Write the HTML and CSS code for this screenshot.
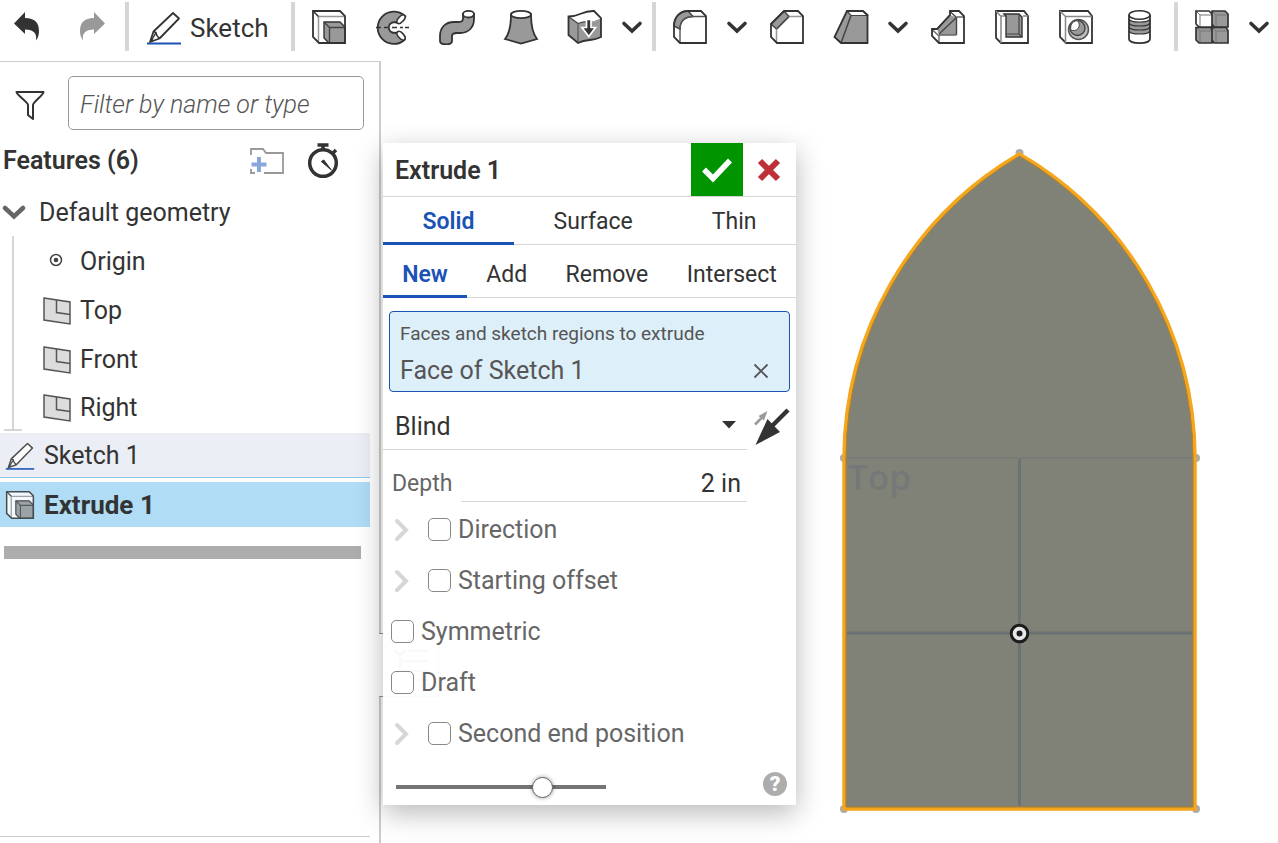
FILE: index.html
```html
<!DOCTYPE html>
<html lang="en">
<head>
<meta charset="utf-8">
<title>Part Studio</title>
<link rel="stylesheet" href="styles.css">
</head>
<body>
<svg class="defs" width="0" height="0" aria-hidden="true">
  <symbol id="i-caret" viewBox="0 0 22 36"><path d="M3 14.500l8 7.500 8-7.500" fill="none" stroke="#333" stroke-width="3.600" stroke-linecap="round"/></symbol>
  <symbol id="i-pencil" viewBox="0 0 36 36">
    <path d="M1 33.500H35" stroke="#1b52b5" stroke-width="2.200"/>
    <path d="M4 32l3.500-10.500L27 3l6 5.500L13.500 28.500z" fill="#fff" stroke="#333" stroke-width="1.800" stroke-linejoin="round"/>
    <path d="M7.500 21.500l2.500 1 .8 3 2.700 3M10 22.500l-4 7" fill="none" stroke="#333" stroke-width="1.500"/>
    <path d="M4 32l1.200-4 2.600 2.200z" fill="#333"/>
  </symbol>
  <symbol id="i-extrude" viewBox="0 0 36 36">
    <path d="M2 2H29L34 7V34H8L2 28z" fill="#fff"/>
    <path d="M7.500 34V7.500H34" fill="none" stroke="#999" stroke-width="1.500"/><path d="M2 2l5.500 5.500" stroke="#333" stroke-width="1.500"/>
    <path d="M13 13H29L34 18V34H18L13 29z" fill="#999" stroke="#333" stroke-width="1.400"/>
    <path d="M13 13l5.500 5.500H34M18.500 18.500V34" fill="none" stroke="#444" stroke-width="1.400"/>
    <path d="M2 2H29L34 7V34H8L2 28z" fill="none" stroke="#333" stroke-width="1.800"/>
  </symbol>
  <symbol id="i-plane" viewBox="0 0 28 28"><path d="M1 1l26 4v22L1 23z" fill="#dcdcdc" stroke="#555" stroke-width="1.500"/><path d="M13.500 3v12.500L27 17.500" fill="none" stroke="#555" stroke-width="1.500"/></symbol>
  <symbol id="i-arrow" viewBox="0 0 14 24"><path d="M2 3l9 9-9 9" fill="none" stroke="#d6d6d6" stroke-width="4" stroke-linecap="round"/></symbol>
</svg>

<header class="toolbar">
  <div class="group history">
    <button aria-label="Undo"><svg class="icon" viewBox="0 0 36 36"><path d="M5 14.500L16 3v6c10 0 14 5 14 13 0 4-1 7-3 9.500 1-7-2-11-11-11V25z" fill="#333"/></svg></button>
    <button aria-label="Redo"><svg class="icon" viewBox="0 0 36 36"><path d="M32 14.500L21 3v6C11 9 7 14 7 22c0 4 1 7 3 9.500-1-7 2-11 11-11V25z" fill="#999"/></svg></button>
  </div>
  <span class="sep"></span>
  <button class="sketch"><svg class="icon"><use href="#i-pencil"/></svg>Sketch</button>
  <span class="sep"></span>
  <div class="group">
    <button aria-label="Extrude"><svg class="icon"><use href="#i-extrude"/></svg></button>
    <button aria-label="Revolve"><svg class="icon" viewBox="0 0 36 36">
      <path d="M29.500 6.500A16.200 16.200 0 1 0 29.500 31c2-2.500-2-8-6-8-3 2-7 0-7.500-4.500 0-4 4-6 7-4.500 4 0 8-5 6-7.500z" fill="#999" stroke="#333" stroke-width="1.800"/>
      <ellipse cx="26" cy="10.300" rx="2.700" ry="5.200" transform="rotate(42 26 10.300)" fill="#fff" stroke="#333" stroke-width="1.500"/>
      <ellipse cx="26" cy="26.700" rx="2.700" ry="5.200" transform="rotate(-42 26 26.700)" fill="#fff" stroke="#333" stroke-width="1.500"/>
      <circle cx="18.500" cy="18.500" r="4.200" fill="#fff"/>
      <path d="M22 13.700a5.500 5.500 0 1 0 0 9.600" fill="none" stroke="#333" stroke-width="1.600"/>
      <path d="M1 18.500h5m3 0h4m4 0h5m3 0h3m2 0h4" stroke="#333" stroke-width="1.600"/></svg></button>
    <button aria-label="Sweep"><svg class="icon" viewBox="0 0 36 36">
      <path d="M24 5v4c0 4-2 4-6 4h-3C6 13 1 19 1 27v5c0 4.500 12 4.500 12 0v-5c0-2 2-3 5-3h3c9 0 14-6 14-14V5z" fill="#999" stroke="#333" stroke-width="1.800"/>
      <ellipse cx="29.500" cy="5.200" rx="5.500" ry="3.300" fill="#fff" stroke="#333" stroke-width="1.800"/></svg></button>
    <button aria-label="Loft"><svg class="icon" viewBox="0 0 36 36">
      <path d="M8 5.500C8 15 6 25 2 30l16 4.500L34 30C30 25 28 15 28 5.500z" fill="#999" stroke="#333" stroke-width="1.800"/>
      <ellipse cx="18" cy="5.500" rx="10" ry="3.700" fill="#fff" stroke="#333" stroke-width="1.800"/></svg></button>
    <button aria-label="Thicken"><svg class="icon" viewBox="0 0 36 36">
      <path d="M1.500 7.500L11 15c8-4 13 0 23-6v19c-10 6-12 1-22 6l-10.500-8z" fill="#999"/>
      <path d="M1.500 7.500c12 0 13-6 25.500-5.500l7 7c-10 4-13 1-23 5z" fill="#fff"/>
      <path d="M11 14v19.500" stroke="#666" stroke-width="1.500"/><path d="M1.500 7.500l9.500 7M11 14.500c6-2.500 9-1.500 13-2" fill="none" stroke="#444" stroke-width="1.300"/>
      <path d="M1.500 7.500c12 0 13-6 25.500-5.500l7 7v19c-10 5-13 1-23 6l-9.500-8z" fill="none" stroke="#333" stroke-width="1.800"/>
      <path d="M19.500 10.500h4.500v8h4.500l-6.700 9-6.800-9h4.500z" fill="#333" stroke="#fff" stroke-width="1.700"/></svg></button>
    <button class="caret" aria-label="More solid tools"><svg><use href="#i-caret"/></svg></button>
  </div>
  <span class="sep"></span>
  <div class="group">
    <button aria-label="Fillet"><svg class="icon" viewBox="0 0 36 36">
      <path d="M2 17C2 8 8 2 16 2h13l5 5v27H8l-6-6z" fill="#fff"/>
      <path d="M2 17C2 8 8 2 16 2l5 5.500C13 8 8 12 8 20z" fill="#999" stroke="#444" stroke-width="1.400"/>
      <path d="M8 34V20C8 12 13 7.500 21 7.500h13" fill="none" stroke="#555" stroke-width="1.400"/>
      <path d="M2 17C2 8 8 2 16 2h13l5 5v27H8l-6-6z" fill="none" stroke="#333" stroke-width="1.800"/></svg></button>
    <button class="caret" aria-label="More fillet tools"><svg><use href="#i-caret"/></svg></button>
    <button aria-label="Chamfer"><svg class="icon" viewBox="0 0 36 36">
      <path d="M2 15L15 2h14l5 5v27H8l-6-6z" fill="#fff"/>
      <path d="M2 15L15 2l5 5.500L7.500 20z" fill="#999" stroke="#444" stroke-width="1.400"/>
      <path d="M7.500 34V20L20 7.500h14" fill="none" stroke="#999" stroke-width="1.600"/><path d="M7.500 20L20 7.500" stroke="#444" stroke-width="1.400"/>
      <path d="M2 15L15 2h14l5 5v27H8l-6-6z" fill="none" stroke="#333" stroke-width="1.800"/></svg></button>
    <button aria-label="Draft"><svg class="icon" viewBox="0 0 36 36">
      <path d="M14 2h16l4.500 4v28H8l-6.500-6z" fill="#999"/><path d="M14 2h16l4.500 4.500H18z" fill="#fff" stroke="#444" stroke-width="1.200"/>
      <path d="M18 6.500L8 34" stroke="#444" stroke-width="1.500"/><path d="M14 2h16l4.500 4v28H8l-6.500-6z" fill="none" stroke="#333" stroke-width="1.800"/></svg></button>
    <button class="caret" aria-label="More draft tools"><svg><use href="#i-caret"/></svg></button>
    <button aria-label="Rib"><svg class="icon" viewBox="0 0 36 36">
      <path d="M20 2h9l5 5v27H9l-7-7v-7h5L20 6z" fill="#fff"/>
      <path d="M20 6l6.500 2.500V26H9l-2-6z" fill="#999"/>
      <path d="M7 20L20 6M9 25L26.500 8.500M26.500 26V8.500L20 2.500" fill="none" stroke="#444" stroke-width="1.400"/>
      <path d="M26.500 8H34M2 20.500L9 27v7M26.500 26H9" fill="none" stroke="#666" stroke-width="1.400"/>
      <path d="M20 2h9l5 5v27H9l-7-7v-7h5L20 6z" fill="none" stroke="#333" stroke-width="1.800"/></svg></button>
    <button aria-label="Shell"><svg class="icon" viewBox="0 0 36 36">
      <path d="M2 2h28l4 5v27H7l-5-5z" fill="#fff" stroke="#333" stroke-width="1.800"/>
      <path d="M2 2l5 5.500V34M7 7h5M29 7h5" fill="none" stroke="#888" stroke-width="1.500"/>
      <path d="M10 5h15l3 3v20H12V7z" fill="#999" stroke="#333" stroke-width="1.400"/>
      <path d="M25 5v20H12M25 25l3 3" fill="none" stroke="#444" stroke-width="1.200"/></svg></button>
    <button aria-label="Hole"><svg class="icon" viewBox="0 0 36 36">
      <path d="M2 2h28l4 5v27H8l-6-6z" fill="#fff" stroke="#333" stroke-width="1.800"/>
      <path d="M2 2l5.500 5.500V34M7.500 7.500H34" fill="none" stroke="#888" stroke-width="1.500"/>
      <circle cx="20.500" cy="20.500" r="10" fill="#bbb" stroke="#555" stroke-width="1.500"/>
      <circle cx="19.500" cy="19" r="7.500" fill="#999" stroke="#444" stroke-width="1.400"/>
      <path d="M13 16a7 7 0 0 1 6-4.500 5.500 5.500 0 0 1-6.500 9z" fill="#fff" stroke="#444" stroke-width="1"/></svg></button>
    <button aria-label="Thread"><svg class="icon" viewBox="0 0 36 36">
      <path d="M7 6v24c0 5.500 21 5.500 21 0V6z" fill="#fff"/><path d="M7 10v12c1 4 20 4 21 0V10c-1 4-20 4-21 0z" fill="#999"/>
      <path d="M7 10c1 4 20 4 21 0M7 14c1 4 20 4 21 0M7 18c1 4 20 4 21 0M7 22c1 4 20 4 21 0" fill="none" stroke="#333" stroke-width="1.200"/>
      <path d="M7 6v24c0 5.500 21 5.500 21 0V6" fill="none" stroke="#333" stroke-width="1.800"/>
      <ellipse cx="17.500" cy="6" rx="10.500" ry="4.300" fill="#fff" stroke="#333" stroke-width="1.600"/></svg></button>
  </div>
  <span class="sep"></span>
  <div class="group">
    <button aria-label="Pattern"><svg class="icon" viewBox="0 0 36 36">
      <path d="M2 2h13l3 3v13H5l-3-3z" fill="#fff"/><path d="M18 2h13l3 3v13H20l-2-3zM2 19h15l1 3v12H5l-3-3zM18 19h14l2 3v12H20l-2-3z" fill="#999"/>
      <path d="M2 2l4 4h12M6 6v12M18 2l4 4h12M22 6v12M2 18l4 4h12M6 22v12M18 18l4 4h12M22 22v12" fill="none" stroke="#777" stroke-width="1"/>
      <path d="M2 2h13l3 3v13H5l-3-3zM18 2h13l3 3v13H20l-2-3zM2 18.500h15l1 3V34H5l-3-3zM18 18.500h14l2 3V34H20l-2-3z" fill="none" stroke="#333" stroke-width="1.700"/></svg></button>
    <button class="caret" aria-label="More pattern tools"><svg><use href="#i-caret"/></svg></button>
  </div>
</header>

<div class="workspace">
  <aside class="sidebar">
    <div class="filter">
      <svg class="funnel" viewBox="0 0 30 30"><path d="M1.500 2h27c0 3-10.500 10-10.500 13v14l-5-4V15C13 12 1.500 5 1.500 2z" fill="none" stroke="#333" stroke-width="2" stroke-linejoin="round"/></svg>
      <input type="text" aria-label="Filter" placeholder="Filter by name or type">
    </div>
    <div class="features">
      <h2>Features (6)</h2>
      <button aria-label="New folder"><svg class="folder" viewBox="0 0 36 28"><path d="M2 8V2h12l3 4h17v20H15M2 22v4h4" fill="none" stroke="#999" stroke-width="1.800"/><path d="M10 10v15M2.500 17.500h15" stroke="#8aa7dc" stroke-width="4"/></svg></button>
      <button aria-label="Regeneration times"><svg class="watch" viewBox="0 0 32 36"><circle cx="16" cy="20" r="13.300" fill="none" stroke="#333" stroke-width="3.500"/><path d="M10.500 2h11M16 2v5M26 10l3-3" stroke="#333" stroke-width="3.500"/><path d="M14.300 18.500l2.500-1.500 7.500 10z" fill="#333" stroke="#333"/></svg></button>
    </div>
    <button class="row parent"><svg class="twist" viewBox="0 0 24 16"><path d="M3 3l9 8.500L21 3" fill="none" stroke="#666" stroke-width="4.500" stroke-linecap="round"/></svg>Default geometry</button>
    <ul class="children">
      <li><svg class="plane" viewBox="0 0 28 28"><circle cx="13" cy="12" r="5.500" fill="none" stroke="#444" stroke-width="1.500"/><circle cx="13" cy="12" r="2.300" fill="#444"/></svg>Origin</li>
      <li><svg class="plane"><use href="#i-plane"/></svg>Top</li>
      <li><svg class="plane"><use href="#i-plane"/></svg>Front</li>
      <li><svg class="plane"><use href="#i-plane"/></svg>Right</li>
    </ul>
    <button class="row feature hovered"><svg><use href="#i-pencil"/></svg>Sketch 1</button>
    <button class="row feature selected"><svg><use href="#i-extrude"/></svg>Extrude 1</button>
    <div class="rollback"></div>
    <div class="parts"></div>
  </aside>

  <main class="viewport">
    <svg class="model" viewBox="838 146 364 672" role="img" aria-label="Sketch face">
      <g fill="#aaa"><circle cx="1019.500" cy="153" r="4"/><circle cx="844" cy="458" r="4"/><circle cx="1196" cy="458" r="4"/><circle cx="844" cy="809" r="4"/><circle cx="1196" cy="809" r="4"/></g>
      <path d="M844 809V458A353 353 0 0 1 1019.500 154A353 353 0 0 1 1195 458V809z" fill="#818277" stroke="#f5a61d" stroke-width="3.500"/>
      <path d="M846 807V458A351 351 0 0 1 1019.500 156A351 351 0 0 1 1193 458V807z" fill="none" stroke="#b58224" stroke-width="1"/>
      <path d="M847 458H1192" stroke="#777b77" stroke-width="2"/>
      <path d="M1019.500 459V806M847 633H1192" stroke="#6b7274" stroke-width="3"/>
      <circle cx="1019.500" cy="633.500" r="8.300" fill="#e8e8e8" stroke="#1c1c1c" stroke-width="3"/><circle cx="1019.500" cy="633.500" r="3" fill="#1c1c1c"/>
      <text class="plane-name" x="848" y="490">Top</text>
    </svg>
    <button class="panel-tab" aria-label="Collapse list"><svg viewBox="0 0 40 36"><path d="M3 3l6 5 6-5M17 4h20M9 10v12M11 14h26M11 24h26M17 33h20" fill="none" stroke="#888" stroke-width="2.500"/></svg></button>

    <form class="dialog">
      <div class="title"><h3>Extrude 1</h3>
        <button type="button" class="accept" aria-label="Accept"><svg viewBox="0 0 34 28"><path d="M4 13.500l9 9L30 4.500" fill="none" stroke="#fff" stroke-width="5.500"/></svg></button>
        <button type="button" class="cancel" aria-label="Cancel"><svg viewBox="0 0 24 24"><path d="M3 3l18 18M21 3L3 21" stroke="#bf2f38" stroke-width="6"/></svg></button>
      </div>
      <div class="tabs"><button type="button" class="active">Solid</button><button type="button">Surface</button><button type="button">Thin</button></div>
      <div class="tabs ops"><button type="button" class="active">New</button><button type="button">Add</button><button type="button">Remove</button><button type="button">Intersect</button></div>
      <div class="picker">
        <div class="picker-label">Faces and sketch regions to extrude</div>
        <div class="picked">Face of Sketch 1<button type="button" aria-label="Remove face"><svg viewBox="0 0 16 16"><path d="M1.500 1.500l13 13M14.500 1.500l-13 13" stroke="#555" stroke-width="1.800"/></svg></button></div>
      </div>
      <div class="end">
        <div class="select"><select aria-label="End type"><option>Blind</option></select><svg viewBox="0 0 14 8"><path d="M0 0h14L7 7.500z" fill="#333"/></svg></div>
        <button type="button" aria-label="Opposite direction"><svg viewBox="0 0 36 36"><path d="M1 16.500L9 8.500" stroke="#999" stroke-width="2.500"/><path d="M13.500 3L10 12.500 4.500 8z" fill="#999"/><path d="M34 2L18 18" stroke="#333" stroke-width="4.500"/><path d="M1.500 37L13.500 11 26 24z" fill="#333"/></svg></button>
      </div>
      <div class="depth"><label for="depth">Depth</label><input id="depth" type="text" value="2 in"></div>
      <div class="check nested"><svg><use href="#i-arrow"/></svg><label><input type="checkbox">Direction</label></div>
      <div class="check nested"><svg><use href="#i-arrow"/></svg><label><input type="checkbox">Starting offset</label></div>
      <div class="check"><label><input type="checkbox">Symmetric</label></div>
      <div class="check"><label><input type="checkbox">Draft</label></div>
      <div class="check nested"><svg><use href="#i-arrow"/></svg><label><input type="checkbox">Second end position</label></div>
      <div class="foot"><input type="range" aria-label="Opacity" min="0" max="100" value="72"><button type="button" class="help" aria-label="Help">?</button></div>
    </form>
  </main>
</div>
</body>
</html>
```
FILE: styles.css
```css
* { box-sizing: border-box; }
body {
  margin: 0;
  min-height: 100vh;
  display: flex;
  flex-direction: column;
  background: #fff;
  color: #333;
  font: 25px/32px Roboto, "Liberation Sans", sans-serif;
  overflow: hidden;
}
button, input, select { font: inherit; color: inherit; }
button { padding: 0; border: 0; background: none; display: flex; align-items: center; }
svg { display: block; flex: none; }
h2, h3 { margin: 0; font-size: 25px; font-weight: 600; }
.defs { position: absolute; }

.toolbar { display: flex; height: 61px; padding: 2px 0 10px 9px; }
.icon { width: 36px; height: 36px; }
.group { display: flex; align-items: center; gap: 28px; }
.sep { width: 4px; margin: 0 16px; background: #d6d6d6; }
.sketch { gap: 8px; padding: 2px 6px 0 1px; font-size: 26px; }
.caret { margin: 0 -7px 0 -10px; }
.caret svg { width: 22px; height: 36px; }

.workspace { flex: 1; display: flex; }
.sidebar {
  width: 381px;
  border-top: 1px solid #ccc;
  border-right: 2px solid #ccc;
  display: flex;
  flex-direction: column;
}
.filter { display: flex; align-items: center; gap: 23px; padding: 14px 15px 0; }
.funnel { width: 30px; height: 30px; margin-top: 4px; }
.filter input {
  flex: 1;
  min-width: 0;
  height: 54px;
  padding: 2px 11px 0;
  border: 1px solid #999;
  border-radius: 5px;
}
.filter input::placeholder { color: #555; font-weight: 300; font-style: italic; opacity: 1; }
.features { display: flex; align-items: center; height: 58px; gap: 22px; padding: 4px 40px 0 3px; }
.features h2 { flex: 1; }
.folder { width: 36px; height: 28px; }
.watch { width: 32px; height: 36px; }
.row { text-align: left; }
.parent { height: 48px; gap: 13px; padding: 2px 0 0 2px; }
.twist { width: 24px; height: 16px; }
.children {
  position: relative;
  list-style: none;
  margin: 0 0 2px 12px;
  padding: 1px 0 0 29px;
  border-left: 2px solid #d6d6d6;
}
.children::after {
  content: "";
  position: absolute;
  left: -10px;
  bottom: 0;
  width: 18px;
  height: 2px;
  background: #d6d6d6;
}
.children li { display: flex; align-items: center; gap: 9px; height: 49px; }
.children li:last-child { height: 47px; }
.plane { width: 28px; height: 28px; }
.feature { gap: 9px; height: 45px; margin: 0 9px 4px 0; padding-left: 5px; }
.feature svg { width: 30px; height: 30px; opacity: .85; }
.hovered { padding-top: 2px; background: #ebeef4; border-bottom: 1px solid #8fc9ee; }
.selected { background: #b0dcf6; font-size: 26px; font-weight: 700; }
.rollback { height: 13px; margin: 15px 18px 0 4px; background: #adadad; }
.parts { margin: auto 9px 6px 0; border-top: 1px solid #ccc; }

.viewport { position: relative; flex: 1; display: flex; justify-content: flex-end; padding: 85px 76px 0 0; }
.model { width: 364px; height: 672px; }
.plane-name { font: 600 35px "Open Sans", sans-serif; fill: #737978; }
.panel-tab {
  position: absolute;
  top: 572px;
  left: -2px;
  width: 60px;
  height: 64px;
  padding-left: 12px;
  background: #fff;
  border: 1px solid #999;
  border-left: 0;
}
.panel-tab svg { width: 40px; height: 36px; }

.dialog {
  position: absolute;
  top: 82px;
  left: 2px;
  width: 413px;
  background: rgba(255, 255, 255, .95);
  box-shadow: 0 8px 26px rgba(0, 0, 0, .28);
}
.title { display: flex; height: 54px; padding: 0 1px 0 12px; border-bottom: 1px solid #d6d6d6; }
.title h3 { flex: 1; align-self: center; padding-top: 2px; }
.title button { width: 52px; justify-content: center; }
.accept { background: #009400; }
.accept svg { width: 34px; height: 28px; }
.cancel svg { width: 24px; height: 24px; }
.tabs { display: flex; height: 48px; border-bottom: 1px solid #d6d6d6; font-size: 23px; }
.tabs button { flex: 1 1 auto; justify-content: center; margin-bottom: -1px; padding-top: 4px; border-bottom: 3px solid transparent; }
.tabs .active { color: #1b52b5; font-weight: 600; border-color: #1b52b5; }
.ops { height: 53px; padding-top: 6px; }
.picker {
  margin: 13px 6px 0;
  height: 81px;
  padding: 6px 20px 0 10px;
  border: 1px solid #1b52b5;
  border-radius: 4px;
  background: #ddeff9;
  color: #555;
}
.picker-label { font-size: 19px; }
.picked { display: flex; align-items: center; justify-content: space-between; height: 42px; }
.picked svg { width: 16px; height: 16px; }
.end { display: flex; gap: 7px; height: 58px; }
.select { flex: 0 1 364px; display: flex; align-items: center; padding: 12px 11px 0 12px; border-bottom: 1px solid #d6d6d6; }
.select select { flex: 1; height: 40px; padding: 0; appearance: none; border: 0; background: none; }
.select svg { width: 14px; height: 8px; margin-bottom: 4px; }
.end button svg { width: 36px; height: 38px; }
.end button { padding-top: 10px; }
.depth { display: flex; gap: 9px; height: 52px; padding: 14px 49px 0 9px; color: #666; }
.depth label { font-size: 23px; line-height: 40px; }
.depth input {
  flex: 1;
  min-width: 0;
  padding: 2px 6px 0 0;
  border: 0;
  border-bottom: 1px solid #d6d6d6;
  background: none;
  color: #333;
  text-align: right;
}
.check { display: flex; align-items: center; height: 51px; padding: 4px 0 0 8px; color: #666; }
.check svg { width: 14px; height: 24px; margin: 0 19px 0 4px; }
.check label { display: flex; align-items: center; gap: 7px; }
.check input { appearance: none; width: 23px; height: 23px; margin: 0; border: 1px solid #888; border-radius: 5px; background: #fff; }
.foot { display: flex; align-items: center; justify-content: space-between; height: 48px; padding: 0 9px 0 13px; }
.foot input { appearance: none; width: 210px; height: 22px; margin: 12px 0 0; background: linear-gradient(#757575, #757575) center / 100% 4px no-repeat; }
.foot input::-webkit-slider-thumb { appearance: none; width: 21px; height: 21px; border: 1px solid #666; border-radius: 50%; background: #fff; box-shadow: 0 0 4px rgba(0, 0, 0, .4); }
.help { width: 24px; height: 24px; margin-top: 6px; justify-content: center; border-radius: 50%; background: #adadad; color: #fff; font-size: 21px; font-weight: 900; }
```
